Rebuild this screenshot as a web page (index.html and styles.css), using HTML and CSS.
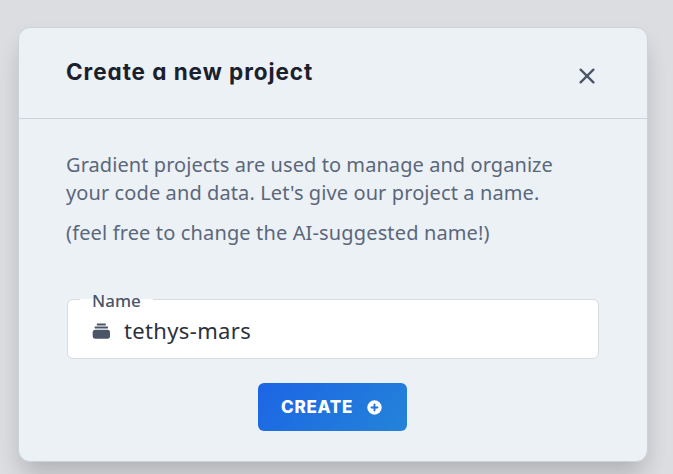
FILE: index.html
```html
<!DOCTYPE html>
<html lang="en">
<head>
<meta charset="utf-8">
<title>Create a new project</title>
<link rel="stylesheet" href="styles.css">
</head>
<body>
<section class="modal">
  <header class="modal-header">
    <h1 class="title">Create a new project</h1>
    <button class="close" aria-label="Close">
      <svg width="16" height="16" viewBox="0 0 16 16"><path d="M1.6 1.6 14.4 14.4M14.4 1.6 1.6 14.4" fill="none" stroke="#4a5568" stroke-width="2.3" stroke-linecap="round"/></svg>
    </button>
  </header>
  <div class="modal-body">
    <p class="copy"><span class="line-a">Gradient projects are used to manage and organize</span><br><span class="line-b">your code and data. Let's give our project a name.</span></p>
    <p class="copy"><span class="line-c">(feel free to change the AI-suggested name!)</span></p>
    <div class="field">
      <label class="label">Name</label>
      <svg class="stack" width="18" height="16" viewBox="0 0 18 16" fill="#4a5568"><rect x="4.8" y="0.6" width="9" height="1.8" rx=".5"/><rect x="2.6" y="3.4" width="13.4" height="2" rx=".6"/><rect x="0.7" y="6.7" width="17.3" height="9" rx="2.6"/></svg>
      <span class="value">tethys-mars</span>
    </div>
    <button class="create">
      <span class="create-text">CREATE</span>
      <svg width="15" height="15" viewBox="0 0 15 15"><circle cx="7.5" cy="7.5" r="7.2" fill="#fff"/><path d="M7.5 4.5v6M4.5 7.5h6" stroke="#2074dc" stroke-width="1.9" stroke-linecap="round"/></svg>
    </button>
  </div>
</section>
</body>
</html>
```
FILE: styles.css
```css
* { box-sizing: border-box; }
body {
  margin: 0;
  height: 474px;
  overflow: hidden;
  padding: 27px 0 0 18px;
  background: #dcdde1;
  font-family: "Noto Sans", sans-serif;
}
.modal {
  width: 630px;
  height: 435px;
  border: 1px solid #cbd2dc;
  border-radius: 12px;
  background: #ecf1f6;
  box-shadow: 0 20px 25px -5px rgba(0, 0, 0, .12), 0 10px 24px -2px rgba(0, 0, 0, .08);
}
.modal-header {
  display: flex;
  justify-content: space-between;
  height: 91px;
  padding: 0 52px 0 47px;
  border-bottom: 1px solid #cbd2dc;
}
.title {
  margin: 28px 0 0;
  font: 700 22.5px/32px Inter, sans-serif;
  font-feature-settings: "cv11";
  letter-spacing: .95px;
  color: #1a202c;
  white-space: nowrap;
}
button { border: 0; padding: 0; background: none; }
.close { height: 16px; margin-top: 40px; }
.close svg { display: block; }
.modal-body {
  display: flex;
  flex-direction: column;
  padding: 32px 48px 0 47px;
}
.copy {
  margin: 0 0 12px;
  font-size: 20px;
  line-height: 28px;
  color: #5b677a;
  white-space: nowrap;
}
.line-a { letter-spacing: .07px; }
.line-b { letter-spacing: .1px; }
.line-c { letter-spacing: .14px; }
.field {
  display: flex;
  position: relative;
  align-items: center;
  gap: 14px;
  height: 60px;
  margin: 40px 0 24px 1px;
  padding: 4px 24px 0;
  border: 1px solid #d7dbe2;
  border-radius: 6px;
  background: #fff;
}
.label {
  position: absolute;
  top: -11px;
  left: 12px;
  padding: 0 12px;
  width: 73px;
  font-size: 17px;
  font-weight: 500;
  line-height: 24px;
  color: #4a5568;
  background: linear-gradient(#fff, #fff) 0 10px / 100% 1px no-repeat;
}
.value {
  margin-top: -2px;
  font-size: 22px;
  line-height: 32px;
  letter-spacing: .35px;
  color: #2b303b;
}
.create {
  display: flex;
  align-self: center;
  align-items: center;
  justify-content: space-between;
  width: 149px;
  height: 48px;
  padding: 0 25px 0 23px;
  border-radius: 6px;
  background: linear-gradient(135deg, #1c64e5, #2484d8);
  color: #fff;
}
.create-text { font: 800 17px/24px Inter, sans-serif; letter-spacing: .75px; }
```
